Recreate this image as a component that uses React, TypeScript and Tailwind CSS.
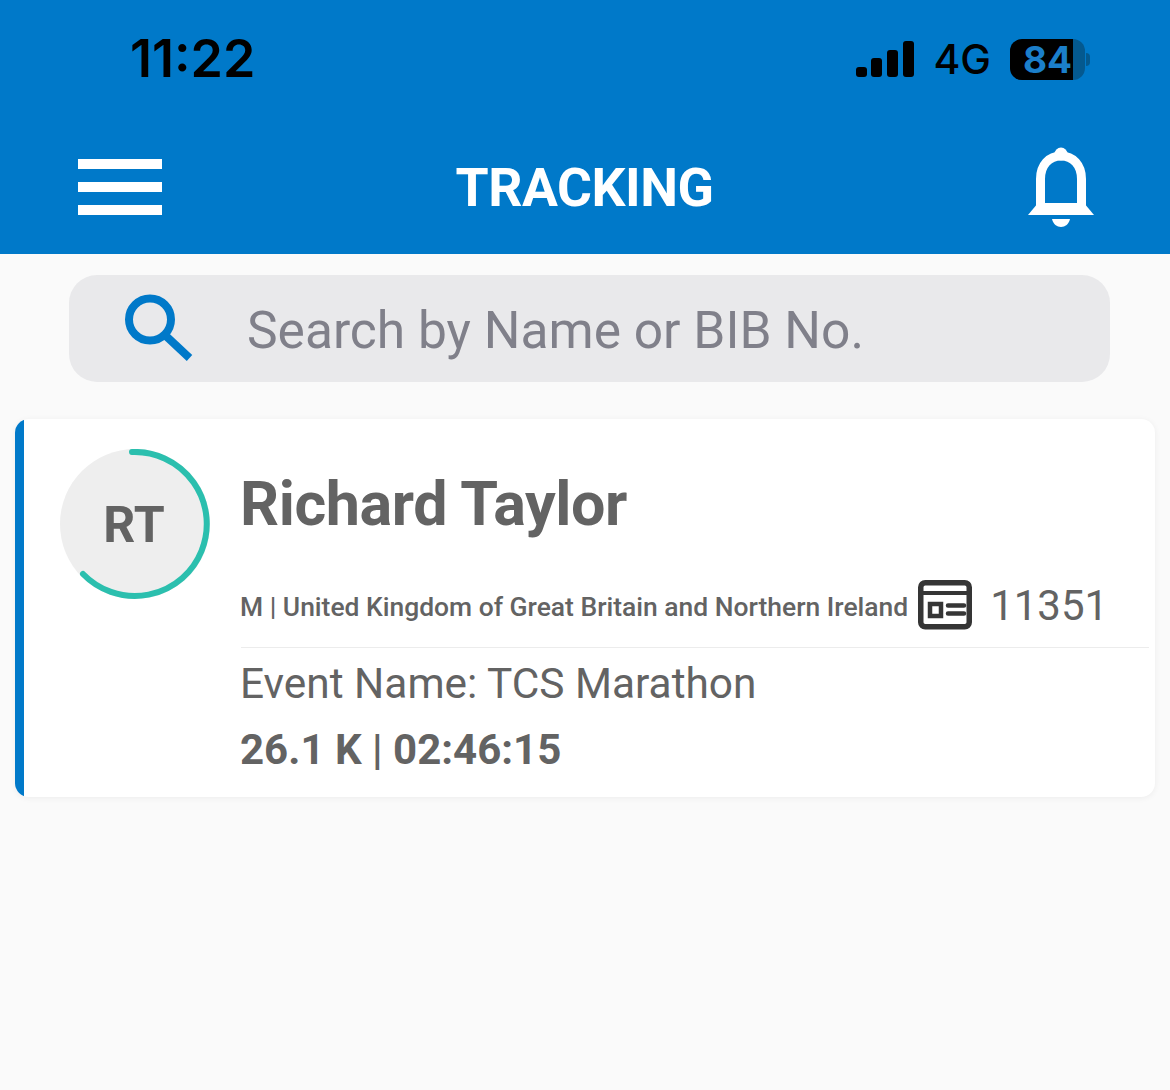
function Signal() {
  return (
    <svg width="58" height="38" viewBox="0 0 58 38" className="text-black">
      <rect x="0" y="27" width="11" height="10" rx="3" fill="currentColor" />
      <rect x="15" y="18" width="11" height="19" rx="3" fill="currentColor" />
      <rect x="31" y="10" width="11" height="27" rx="3" fill="currentColor" />
      <rect x="47" y="1" width="11" height="36" rx="3" fill="currentColor" />
    </svg>
  );
}

function Battery() {
  return (
    <div className="flex items-center">
      <div className="flex h-[41px] w-[75px] rounded-[12px] bg-[#04598f]">
        <div className="flex h-full w-[63px] items-center justify-end rounded-l-[12px] bg-black pr-[1px] text-[37px] font-bold leading-none text-[#1b7fca]">
          84
        </div>
      </div>
      <div className="ml-[1px] h-[13px] w-[4px] rounded-r-full bg-[#04598f]" />
    </div>
  );
}

function Bell() {
  return (
    <svg width="68" height="82" viewBox="0 0 68 82" fill="none">
      <circle cx="34" cy="8" r="6.5" fill="#fff" />
      <path d="M13.5 62V33C13.5 19 22 10 34 10C46 10 54.5 19 54.5 33V62" stroke="#fff" strokeWidth="9" />
      <path d="M1 69L11 57H57L67 69Z" fill="#fff" />
      <path d="M25 73H43C42 78 38 81 34 81C30 81 26 78 25 73Z" fill="#fff" />
    </svg>
  );
}

function SearchIcon() {
  return (
    <svg width="70" height="70" viewBox="0 0 70 70" fill="none">
      <circle cx="26" cy="25.5" r="21" stroke="#0079c9" strokeWidth="8" />
      <path d="M42 42L65.5 64" stroke="#0079c9" strokeWidth="8" />
    </svg>
  );
}

function BibIcon() {
  return (
    <svg width="54" height="50" viewBox="0 0 54 50" fill="none">
      <rect x="2.75" y="2.75" width="48.5" height="44" rx="4.5" stroke="#353535" strokeWidth="5.5" />
      <path d="M3 13H51" stroke="#353535" strokeWidth="4" />
      <rect x="12" y="24" width="11" height="12" stroke="#353535" strokeWidth="4.5" />
      <path d="M30 25.5H46M30 33.5H46" stroke="#353535" strokeWidth="4.5" strokeLinecap="round" />
    </svg>
  );
}

function Avatar() {
  return (
    <div className="relative flex h-[150px] w-[150px] shrink-0 items-center justify-center">
      <div className="h-[150px] w-[150px] rounded-full bg-[#eeeeee]" />
      <span className="absolute pt-[2px] pr-[2px] text-[50px] font-bold text-[#636363]">RT</span>
      <svg className="absolute inset-0" width="150" height="150" viewBox="0 0 150 150" fill="none">
        <path d="M72 3A72 72 0 1 1 23 125" stroke="#2bbfae" strokeWidth="6" strokeLinecap="round" />
      </svg>
    </div>
  );
}

export default function App() {
  return (
    <div className="h-[1090px] w-[1170px] overflow-hidden bg-[#fafafa] font-['Roboto',sans-serif]">
      <header className="h-[254px] bg-[#0079c9]">
        <div className="flex h-[118px] items-center justify-between pl-[130px] pr-[80px]">
          <span className="text-[52px] font-semibold leading-none text-black [font-family:'Inter',sans-serif]">
            11:22
          </span>
          <div className="flex items-center [font-family:'Inter',sans-serif]">
            <Signal />
            <span className="mx-[19px] text-[41px] font-medium leading-none text-black">4G</span>
            <Battery />
          </div>
        </div>
        <div className="flex h-[136px] items-start justify-between pl-[78px] pr-[75px] pt-[28px]">
          <div className="flex w-[84px] flex-col gap-[13px] pt-[13px]">
            <div className="h-[10px] bg-white" />
            <div className="h-[10px] bg-white" />
            <div className="h-[10px] bg-white" />
          </div>
          <h1 className="mr-[20px] pt-[6px] text-[53.5px] font-bold leading-[72px] tracking-[-0.5px] text-white">
            TRACKING
          </h1>
          <Bell />
        </div>
      </header>

      <div className="pl-[69px] pr-[60px] pt-[21px]">
        <div className="flex h-[107px] items-center rounded-[28px] bg-[#e9e9eb] pl-[55px]">
          <SearchIcon />
          <span className="ml-[53px] pt-[4px] text-[51.5px] leading-none text-[#80808a]">Search by Name or BIB No.</span>
        </div>
      </div>

      <div className="mx-[15px] mt-[37px] flex h-[378px] overflow-hidden rounded-[14px] bg-white shadow-[0_1px_6px_rgba(0,0,0,0.06)]">
        <div className="w-[9px] shrink-0 bg-[#0079c9]" />
        <div className="flex min-w-0 flex-1 pl-[36px] pr-[6px] pt-[30px]">
          <Avatar />
          <div className="ml-[31px] min-w-0 flex-1 pt-[19px]">
            <h2 className="-ml-[1px] text-[61px] font-bold leading-[72px] tracking-[-0.4px] text-[#636363]">
              Richard Taylor
            </h2>
            <div className="mt-[33px] flex h-[75px] items-center border-b border-[#ececec] pb-[6px]">
              <span className="-ml-[1px] whitespace-nowrap text-[26.45px] font-medium text-[#636363]">
                M | United Kingdom of Great Britain and Northern Ireland
              </span>
              <span className="mb-[5px] ml-[10px]">
                <BibIcon />
              </span>
              <span className="mb-[3px] ml-[18px] text-[42px] leading-none text-[#636363]">11351</span>
            </div>
            <p className="-ml-[1px] mt-[10px] text-[42.4px] leading-[52px] text-[#636363]">
              Event Name: TCS Marathon
            </p>
            <p className="-ml-[1px] mt-[14px] text-[42px] font-bold leading-[52px] text-[#636363]">
              26.1 K | 02:46:15
            </p>
          </div>
        </div>
      </div>
    </div>
  );
}
